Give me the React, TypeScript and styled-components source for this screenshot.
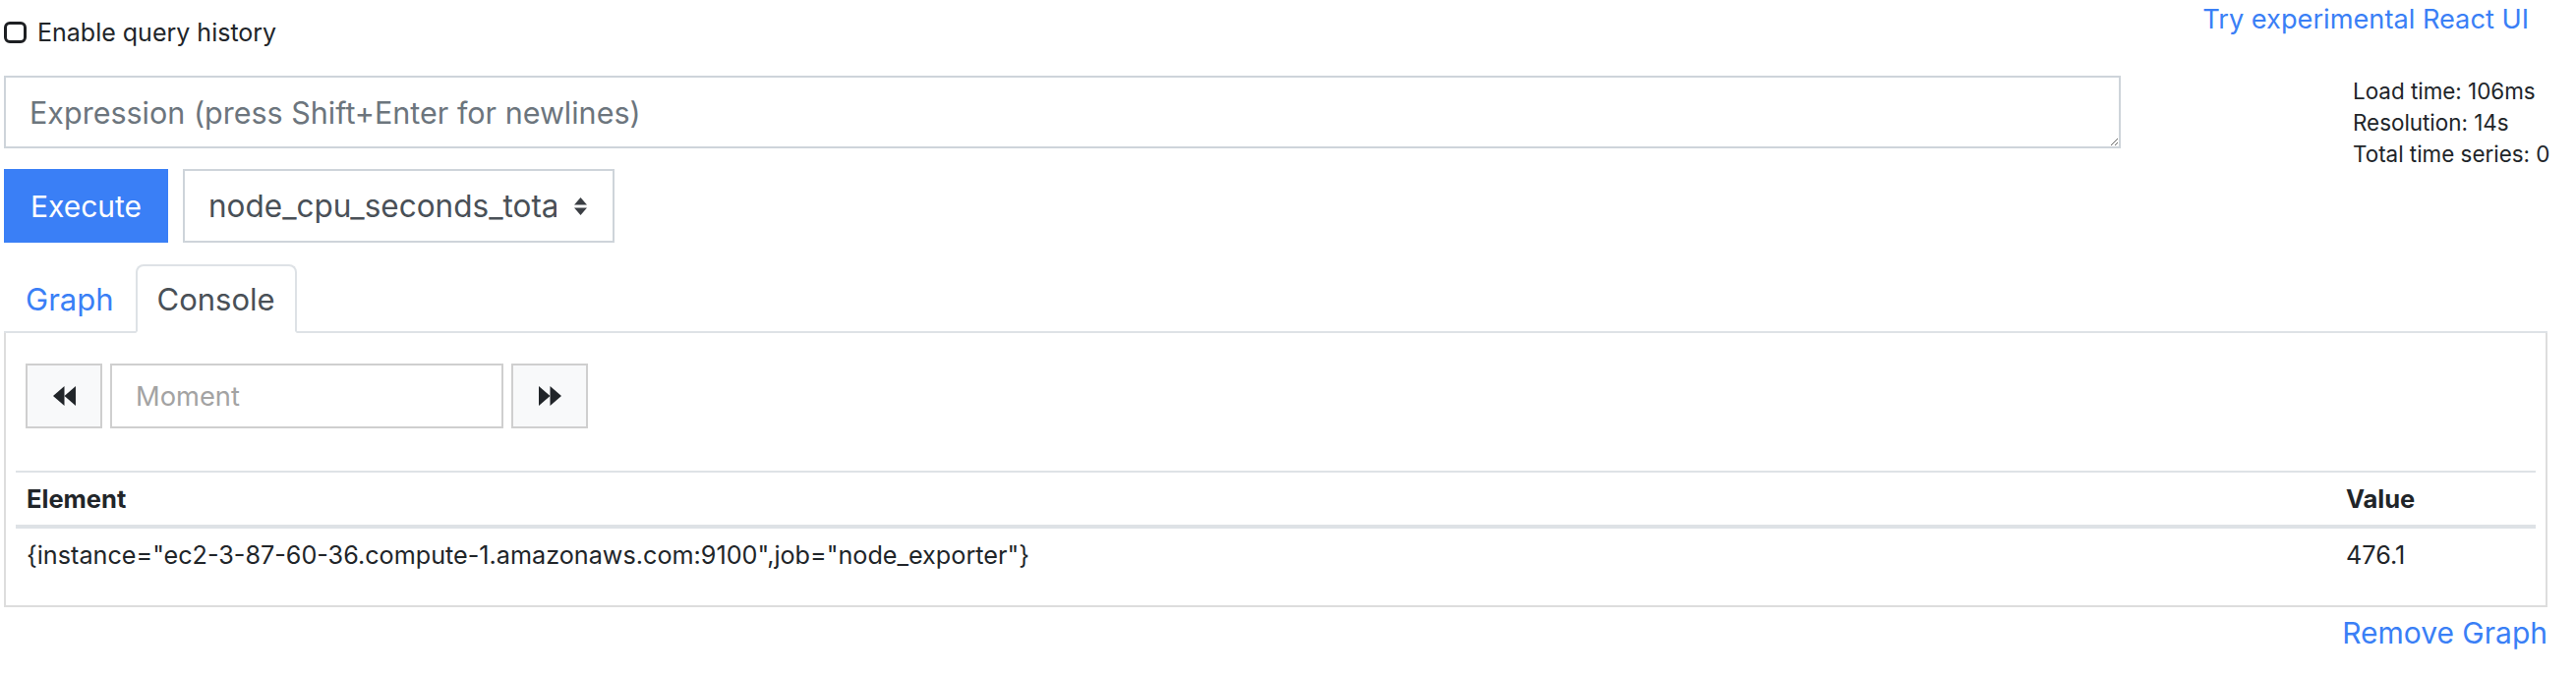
import React from "react";
import styled, { createGlobalStyle } from "styled-components";

const GlobalStyle = createGlobalStyle`
  html, body { margin: 0; padding: 0; background: #fff; }
  body { font-family: Inter, "Liberation Sans", sans-serif; color: #212529; }
  * { box-sizing: border-box; }
`;

const primary = "#3a7ff6";

const Page = styled.div`
  width: 2620px;
  padding: 0 29px 0 4px;
`;

const TopBar = styled.div`
  display: flex;
  justify-content: space-between;
  align-items: flex-start;
  height: 51px;
`;

const HistoryLabel = styled.label`
  display: flex;
  align-items: center;
  gap: 11px;
  margin-top: 15px;
  line-height: 36px;
  font-size: 25px;
`;

const Check = styled.input`
  appearance: none;
  margin: 0;
  width: 23px;
  height: 22px;
  border: 3.5px solid #1d1f22;
  border-radius: 6px;
  background: #fff;
`;

const Link = styled.a`
  font-size: 27.2px;
  line-height: 40px;
  color: ${primary};
  text-decoration: none;
  margin-right: 19px;
`;

const QueryGrid = styled.div`
  display: grid;
  grid-template-columns: minmax(0, 1fr) 198px;
  grid-template-rows: 74px;
  column-gap: 236px;
  margin-top: 26px;
`;

const Expression = styled.textarea`
  display: block;
  width: 100%;
  height: 74px;
  border: 2px solid #ced4da;
  border-radius: 0;
  padding: 16px 24px 13px;
  font-family: inherit;
  font-size: 30.5px;
  line-height: 39px;
  color: #495057;
  resize: vertical;
  &::placeholder { color: #6c757d; }
`;

const Stats = styled.div`
  font-size: 22.4px;
  line-height: 32px;
  white-space: nowrap;
`;

const ExecRow = styled.div`
  display: flex;
  gap: 15px;
  margin-top: 21px;
  height: 75px;
`;

const ExecuteButton = styled.button`
  width: 167px;
  height: 75px;
  border: none;
  background: ${primary};
  color: #fff;
  font-family: inherit;
  font-size: 30px;
  padding: 0;
`;

const SelectBox = styled.div`
  width: 439px;
  height: 75px;
  border: 2px solid #ced4da;
  display: flex;
  align-items: center;
  padding-left: 24px;
  gap: 17px;
  font-size: 31.5px;
  color: #495057;
`;

const SelectValue = styled.span`
  width: 354px;
  overflow: hidden;
  white-space: nowrap;
  text-overflow: clip;
`;

const Nav = styled.div`
  display: flex;
  margin-top: 22px;
  height: 70px;
  border-bottom: 2px solid #dee2e6;
`;

const Tab = styled.div<{ $active?: boolean }>`
  height: 70px;
  margin-bottom: -2px;
  padding: 0 20px;
  display: flex;
  align-items: center;
  font-size: 31px;
  border: 2px solid ${(p) => (p.$active ? "#dee2e6" : "transparent")};
  border-bottom-color: ${(p) => (p.$active ? "#fff" : "transparent")};
  border-radius: 8px 8px 0 0;
  background: ${(p) => (p.$active ? "#fff" : "transparent")};
  color: ${(p) => (p.$active ? "#495057" : primary)};
`;

const Panel = styled.div`
  border: 2px solid #ddd;
  border-top: none;
  padding: 31px 10px 24px;
`;

const MomentRow = styled.div`
  display: flex;
  gap: 8px;
  margin-left: 10px;
  height: 66px;
`;

const StepButton = styled.button`
  width: 78px;
  height: 66px;
  background: #f8f9fa;
  border: 2px solid #cfcfcf;
  display: flex;
  align-items: center;
  justify-content: center;
  padding: 0;
`;

const MomentInput = styled.input`
  width: 400px;
  height: 66px;
  border: 2px solid #cfcfcf;
  padding: 0 24px;
  font-family: inherit;
  font-size: 27.3px;
  &::placeholder { color: #a3a3a3; }
`;

const Table = styled.table`
  width: 100%;
  margin-top: 43px;
  border-collapse: collapse;
  border-top: 2px solid #dee2e6;
`;

const Th = styled.th<{ $w?: number }>`
  height: 56px;
  padding: 0 11px;
  text-align: left;
  font-size: 25.5px;
  font-weight: 700;
  border-bottom: 4px solid #dee2e6;
  width: ${(p) => (p.$w ? `${p.$w}px` : "auto")};
`;

const Td = styled.td`
  height: 56px;
  padding: 0 11px;
  font-size: 25.2px;
`;

const Footer = styled.div`
  text-align: right;
  margin-top: 4px;
  font-size: 30px;
  line-height: 45px;
  color: ${primary};
`;

const Backward = () => (
  <svg width="23" height="20" viewBox="0 0 23 20">
    <polygon points="0,10 11.5,0 11.5,20" fill="#212529" />
    <polygon points="11.5,10 23,0 23,20" fill="#212529" />
  </svg>
);

const Forward = () => (
  <svg width="23" height="20" viewBox="0 0 23 20">
    <polygon points="0,0 11.5,10 0,20" fill="#212529" />
    <polygon points="11.5,0 23,10 11.5,20" fill="#212529" />
  </svg>
);

const UpDown = () => (
  <svg width="15" height="20" viewBox="0 0 15 20">
    <polygon points="1,8.5 7.5,1 14,8.5" fill="#3b3f44" />
    <polygon points="1,11.5 7.5,19 14,11.5" fill="#3b3f44" />
  </svg>
);

export default function App() {
  return (
    <Page>
      <GlobalStyle />
      <TopBar>
        <HistoryLabel>
          <Check type="checkbox" />
          Enable query history
        </HistoryLabel>
        <Link href="#">Try experimental React UI</Link>
      </TopBar>
      <QueryGrid>
        <Expression placeholder="Expression (press Shift+Enter for newlines)" />
        <Stats>
          <div>Load time: 106ms</div>
          <div>Resolution: 14s</div>
          <div>Total time series: 0</div>
        </Stats>
      </QueryGrid>
      <ExecRow>
        <ExecuteButton>Execute</ExecuteButton>
        <SelectBox>
          <SelectValue>node_cpu_seconds_total</SelectValue>
          <UpDown />
        </SelectBox>
      </ExecRow>
      <Nav>
        <Tab>Graph</Tab>
        <Tab $active>Console</Tab>
      </Nav>
      <Panel>
        <MomentRow>
          <StepButton>
            <Backward />
          </StepButton>
          <MomentInput placeholder="Moment" />
          <StepButton>
            <Forward />
          </StepButton>
        </MomentRow>
        <Table>
          <thead>
            <tr>
              <Th>Element</Th>
              <Th $w={204}>Value</Th>
            </tr>
          </thead>
          <tbody>
            <tr>
              <Td>{'{instance="ec2-3-87-60-36.compute-1.amazonaws.com:9100",job="node_exporter"}'}</Td>
              <Td>476.1</Td>
            </tr>
          </tbody>
        </Table>
      </Panel>
      <Footer>Remove Graph</Footer>
    </Page>
  );
}
